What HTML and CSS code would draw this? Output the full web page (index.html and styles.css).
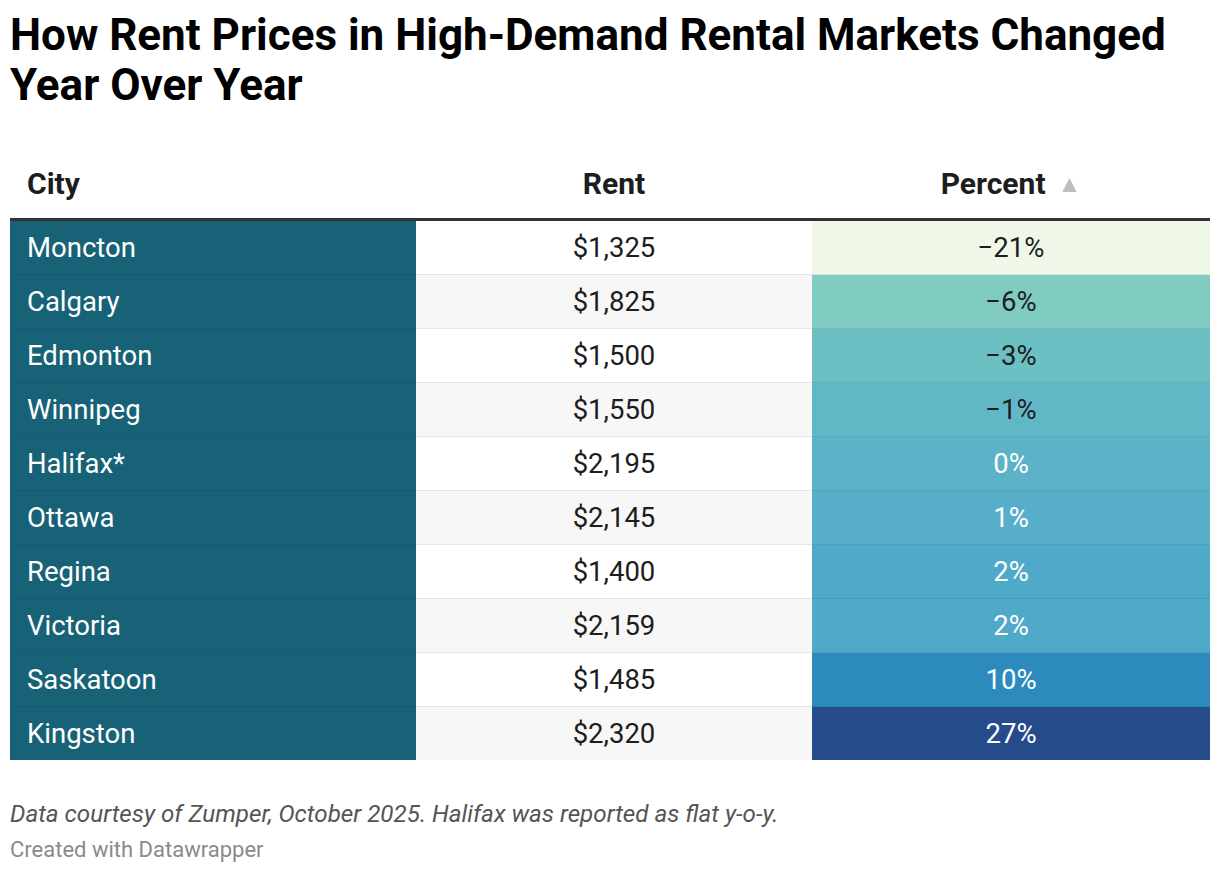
FILE: index.html
```html
<!DOCTYPE html>
<html lang="en">
<head>
<meta charset="utf-8">
<title>Rent Prices</title>
<link rel="stylesheet" href="styles.css">
</head>
<body>
<div class="chart">
  <h1 class="title">How Rent Prices in High-Demand Rental Markets Changed Year Over Year</h1>
  <div class="table">
    <div class="row head">
      <div class="cell city">City</div>
      <div class="cell rent">Rent</div>
      <div class="cell pct">Percent <span class="arrow">▲</span></div>
    </div>
    <div class="row odd">
      <div class="cell city">Moncton</div>
      <div class="cell rent">$1,325</div>
      <div class="cell pct dark-text" style="background:#eff8e8">−21%</div>
    </div>
    <div class="row even">
      <div class="cell city">Calgary</div>
      <div class="cell rent">$1,825</div>
      <div class="cell pct dark-text" style="background:#80cbc2">−6%</div>
    </div>
    <div class="row odd">
      <div class="cell city">Edmonton</div>
      <div class="cell rent">$1,500</div>
      <div class="cell pct dark-text" style="background:#6cbfc3">−3%</div>
    </div>
    <div class="row even">
      <div class="cell city">Winnipeg</div>
      <div class="cell rent">$1,550</div>
      <div class="cell pct dark-text" style="background:#62b7c7">−1%</div>
    </div>
    <div class="row odd">
      <div class="cell city">Halifax*</div>
      <div class="cell rent">$2,195</div>
      <div class="cell pct" style="background:#5cb2c7">0%</div>
    </div>
    <div class="row even">
      <div class="cell city">Ottawa</div>
      <div class="cell rent">$2,145</div>
      <div class="cell pct" style="background:#56aec8">1%</div>
    </div>
    <div class="row odd">
      <div class="cell city">Regina</div>
      <div class="cell rent">$1,400</div>
      <div class="cell pct" style="background:#4fa9c9">2%</div>
    </div>
    <div class="row even">
      <div class="cell city">Victoria</div>
      <div class="cell rent">$2,159</div>
      <div class="cell pct" style="background:#4fa9c9">2%</div>
    </div>
    <div class="row odd">
      <div class="cell city">Saskatoon</div>
      <div class="cell rent">$1,485</div>
      <div class="cell pct" style="background:#2c8abd">10%</div>
    </div>
    <div class="row even last">
      <div class="cell city">Kingston</div>
      <div class="cell rent">$2,320</div>
      <div class="cell pct" style="background:#254b8b">27%</div>
    </div>
  </div>
  <p class="note">Data courtesy of Zumper, October 2025. Halifax was reported as flat y-o-y.</p>
  <p class="credit">Created with Datawrapper</p>
</div>
</body>
</html>
```
FILE: styles.css
```css
* { box-sizing: border-box; }
body {
  margin: 0;
  background: #ffffff;
  font-family: Roboto, "Liberation Sans", sans-serif;
  color: #1d1d1d;
}
.chart {
  padding: 10px 10px 0 10px;
  width: 1220px;
}
.title {
  margin: 0;
  font-size: 44px;
  line-height: 50px;
  font-weight: 700;
  color: #000;
  letter-spacing: 0;
}
.table {
  margin-top: 52px;
  width: 1200px;
}
.row {
  display: grid;
  grid-template-columns: 406px 396px 398px;
  height: 54px;
}
.row.head {
  height: 59px;
  border-bottom: 3px solid #333333;
  align-items: start;
}
.cell {
  display: flex;
  align-items: center;
  font-size: 27.5px;
  line-height: 32px;
}
.head .cell {
  font-weight: 700;
  color: #1d1d1d;
  height: 44px;
  font-size: 30px;
}
.cell.city {
  padding-left: 17px;
}
.cell.rent, .cell.pct {
  justify-content: center;
}
.row:not(.head) .cell.city {
  background: #176277;
  color: #ffffff;
}
.row:not(.head) .cell.pct {
  color: #ffffff;
}
.row:not(.head) .cell.pct.dark-text {
  color: #1d1d1d;
}
.row.odd .cell.rent { background: #ffffff; }
.row.even .cell.rent { background: #f7f7f7; }
.row:not(.head):not(.last) .cell {
  border-bottom: 1px solid #e6e6e6;
}
.row:not(.head):not(.last) .cell.city,
.row:not(.head):not(.last) .cell.pct {
  border-bottom-color: rgba(0, 0, 0, 0.07);
}
.row.last { height: 53px; }
.arrow {
  color: #bdbdbd;
  font-size: 24px;
  margin-left: 12px;
}
.note {
  margin: 39px 0 0 0;
  font-size: 24.2px;
  line-height: 30px;
  font-style: italic;
  color: #555555;
}
.credit {
  margin: 8px 0 0 0;
  font-size: 22px;
  line-height: 26px;
  color: #8a8a8a;
}
```
